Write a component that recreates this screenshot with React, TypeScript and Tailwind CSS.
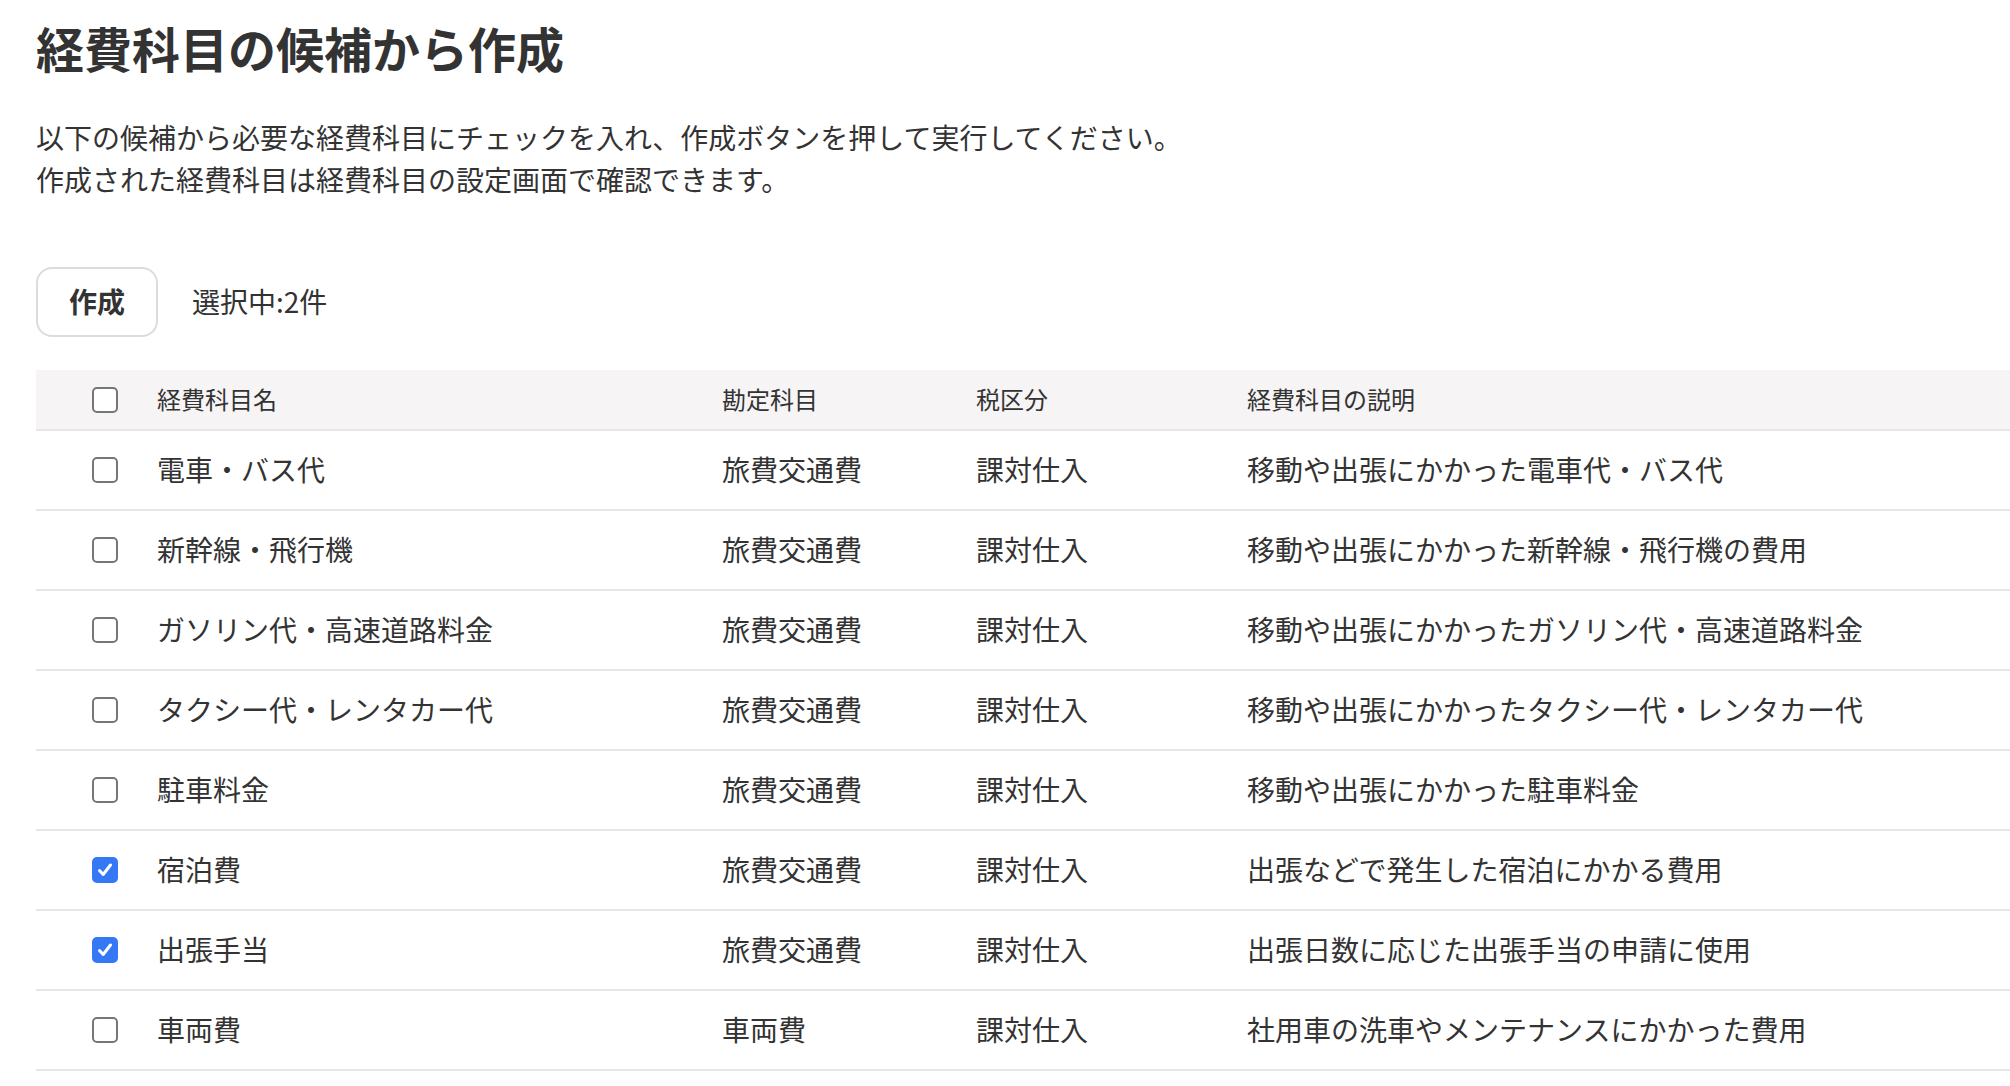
import React, { useState } from "react";

type Row = { name: string; account: string; tax: string; desc: string; checked: boolean };

const initialRows: Row[] = [
  { name: "電車・バス代", account: "旅費交通費", tax: "課対仕入", desc: "移動や出張にかかった電車代・バス代", checked: false },
  { name: "新幹線・飛行機", account: "旅費交通費", tax: "課対仕入", desc: "移動や出張にかかった新幹線・飛行機の費用", checked: false },
  { name: "ガソリン代・高速道路料金", account: "旅費交通費", tax: "課対仕入", desc: "移動や出張にかかったガソリン代・高速道路料金", checked: false },
  { name: "タクシー代・レンタカー代", account: "旅費交通費", tax: "課対仕入", desc: "移動や出張にかかったタクシー代・レンタカー代", checked: false },
  { name: "駐車料金", account: "旅費交通費", tax: "課対仕入", desc: "移動や出張にかかった駐車料金", checked: false },
  { name: "宿泊費", account: "旅費交通費", tax: "課対仕入", desc: "出張などで発生した宿泊にかかる費用", checked: true },
  { name: "出張手当", account: "旅費交通費", tax: "課対仕入", desc: "出張日数に応じた出張手当の申請に使用", checked: true },
  { name: "車両費", account: "車両費", tax: "課対仕入", desc: "社用車の洗車やメンテナンスにかかった費用", checked: false },
];

function Checkbox({ checked, onChange }: { checked: boolean; onChange: () => void }) {
  return (
    <button
      type="button"
      onClick={onChange}
      className={
        checked
          ? "flex h-[26px] w-[26px] items-center justify-center rounded-[5px] bg-[#3478f6]"
          : "flex h-[26px] w-[26px] items-center justify-center rounded-[5px] border-2 border-[#767676] bg-white"
      }
    >
      {checked && (
        <svg width="18" height="18" viewBox="0 0 18 18" fill="none">
          <path d="M3.5 9.5 L7.2 13.5 L14.5 4" stroke="white" strokeWidth="3" strokeLinecap="round" strokeLinejoin="round" />
        </svg>
      )}
    </button>
  );
}

export default function App() {
  const [rows, setRows] = useState<Row[]>(initialRows);
  const count = rows.filter((r) => r.checked).length;
  const allChecked = rows.every((r) => r.checked);

  const toggle = (i: number) =>
    setRows((rs) => rs.map((r, j) => (j === i ? { ...r, checked: !r.checked } : r)));
  const toggleAll = () => setRows((rs) => rs.map((r) => ({ ...r, checked: !allChecked })));

  return (
    <div
      className="min-h-[1086px] w-full bg-white pl-[36px] pt-[11px] text-[#333333]"
      style={{ fontFamily: '"Noto Sans CJK JP", "Noto Sans", sans-serif' }}
    >
      <h1 className="text-[48px] font-bold leading-[72px] tracking-[0px]">経費科目の候補から作成</h1>
      <div className="mt-[33px] text-[28px] leading-[42px]">
        <p>以下の候補から必要な経費科目にチェックを入れ、作成ボタンを押して実行してください。</p>
        <p>作成された経費科目は経費科目の設定画面で確認できます。</p>
      </div>

      <div className="mt-[67px] flex items-center gap-[34px]">
        <button
          type="button"
          className="flex h-[70px] w-[122px] items-center justify-center rounded-[16px] border-2 border-[#dcdcdc] bg-white pb-[3px] text-[28px] font-bold"
        >
          作成
        </button>
        <span className="pb-[3px] text-[28px]">選択中:{count}件</span>
      </div>

      <div className="mt-[33px] w-full">
        <div className="grid h-[61px] grid-cols-[121px_565px_254px_271px_1fr] items-center border-b-2 border-[#e6e6e6] bg-[#f6f4f5] text-[24px]">
          <div className="pl-[56px]">
            <Checkbox checked={allChecked} onChange={toggleAll} />
          </div>
          <div className="pb-[2px]">経費科目名</div>
          <div className="pb-[2px]">勘定科目</div>
          <div className="pb-[2px]">税区分</div>
          <div className="pb-[2px]">経費科目の説明</div>
        </div>
        {rows.map((r, i) => (
          <div
            key={r.name}
            className="grid h-[80px] grid-cols-[121px_565px_254px_271px_1fr] items-center border-b-2 border-[#e6e6e6] text-[28px]"
          >
            <div className="pl-[56px]">
              <Checkbox checked={r.checked} onChange={() => toggle(i)} />
            </div>
            <div className="pb-[3px]">{r.name}</div>
            <div className="pb-[3px]">{r.account}</div>
            <div className="pb-[3px]">{r.tax}</div>
            <div className="pb-[3px]">{r.desc}</div>
          </div>
        ))}
      </div>
    </div>
  );
}
